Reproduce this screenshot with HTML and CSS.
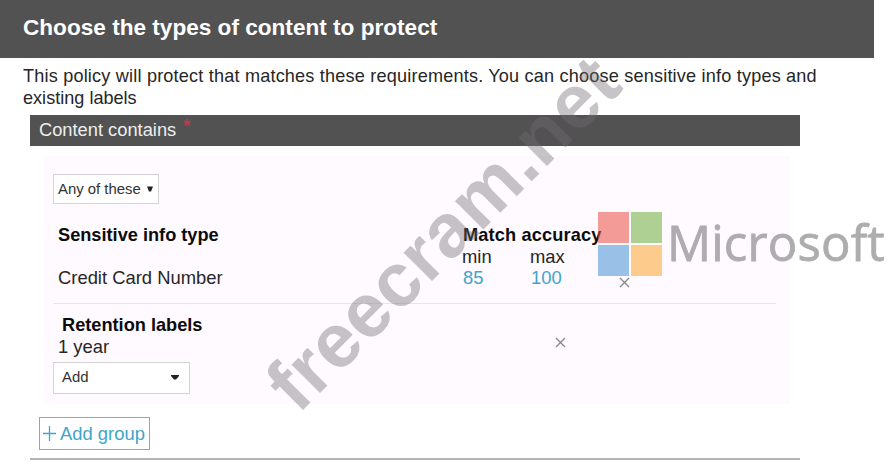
FILE: index.html
```html
<!DOCTYPE html>
<html>
<head>
    <meta charset="utf-8">
    <title>Choose the types of content to protect</title>
    <link rel="stylesheet" href="styles.css">
</head>
<body>
    <h1 class="page-title">Choose the types of content to protect</h1>
    <p class="intro"><span class="first-line">This policy will protect that matches these requirements. You can choose sensitive info types and</span><br>existing labels</p>

    <div class="policy">
        <h2 class="section-title">Content contains <span class="required">*</span></h2>

        <div class="group">
            <button class="select select-any">Any of these
                <svg class="arrow" width="6" height="6" viewBox="0 0 6 6"><path d="M0 .5h6L4 5.5H2z"/></svg>
            </button>

            <div class="info-types">
                <b>Sensitive info type</b>
                <b class="accuracy">Match accuracy</b>
                <span class="min">min</span>
                <span class="max">max</span>
                <span class="name">Credit Card Number</span>
                <a class="min value">85</a>
                <a class="max value">100</a>
                <svg class="remove" width="11" height="11" viewBox="0 0 11 11"><path d="M1 1l9 9M10 1l-9 9"/></svg>
            </div>

            <div class="labels">
                <div>
                    <b class="labels-title">Retention labels</b>
                    <div class="label-name">1 year</div>
                </div>
                <svg class="remove" width="11" height="11" viewBox="0 0 11 11"><path d="M1 1l9 9M10 1l-9 9"/></svg>
            </div>

            <button class="select select-add">Add
                <svg class="arrow" width="8" height="5" viewBox="0 0 8 5"><path d="M0 0h8v1L5 4.5H3L0 1z"/></svg>
            </button>
        </div>

        <button class="add-group">
            <svg class="plus" width="13" height="15" viewBox="0 0 13 15"><path d="M6.5 0v15M0 7.5h13"/></svg>
            Add group
        </button>
    </div>

    <!-- overlays -->
    <svg class="watermark" width="890" height="476" viewBox="0 0 890 476">
        <text transform="translate(298 415) rotate(-45)" textLength="462">freecram.net</text>
    </svg>
    <div class="logo">
        <div class="squares">
            <i class="red"></i><i class="green"></i>
            <i class="blue"></i><i class="yellow"></i>
        </div>
        <span class="logo-name">Microsoft</span>
    </div>
</body>
</html>
```

FILE: styles.css
```css
* {
    box-sizing: border-box;
}
body {
    margin: 0;
    height: 476px;
    overflow: hidden;
    position: relative;
    background: #fff;
    color: #262626;
    font-family: "Liberation Sans", Arial, sans-serif;
    font-size: 18.4px;
    line-height: 22px;
}
.page-title {
    margin: 0;
    width: 874px;
    height: 58px;
    padding: 14px 23px;
    background: #525252;
    color: #fff;
    font-size: 22.6px;
    line-height: 27px;
}
.intro {
    margin: 7px 0 6px 23px;
    font-size: 18.1px;
    white-space: nowrap;
}
.first-line {
    letter-spacing: .19px;
}
.policy {
    width: 770px;
    margin-left: 30px;
    padding-bottom: 8px;
    border-bottom: 2px solid #b5b5b5;
}
.section-title {
    margin: 0 0 10px;
    height: 31px;
    padding: 4px 9px;
    background: #525252;
    color: #eee;
    font-size: 18.3px;
    font-weight: normal;
}
.required {
    margin-left: 2px;
    color: #b5404f;
    font-weight: bold;
    position: relative;
    top: -4px;
}
.group {
    width: 746px;
    height: 248px;
    margin-left: 14px;
    padding: 18px 14px 0 9px;
    background: #fefaff;
}
.select {
    display: flex;
    align-items: center;
    justify-content: space-between;
    background: #fff;
    border: 1px solid #d5d3d6;
    color: #333;
    font-family: inherit;
    font-size: 14.9px;
}
.select-any {
    width: 106px;
    height: 30px;
    padding: 0 5px 0 4px;
}
.select-add {
    width: 137px;
    height: 32px;
    padding: 0 10px 2px 8px;
}
.arrow {
    fill: #222;
}
.info-types {
    display: grid;
    grid-template-columns: 404px 68px 89px 1fr;
    grid-template-rows: 22px 21px 22px;
    margin-top: 20px;
    padding: 0 0 14px 5px;
    border-bottom: 1px solid #e9e4ea;
}
b {
    color: #0c0c0c;
    font-size: 18.2px;
}
.accuracy {
    grid-column: 2 / 5;
    padding-left: 1px;
    letter-spacing: .15px;
}
.min {
    grid-column: 2;
}
.max {
    grid-column: 3;
}
.name {
    grid-column: 1;
}
.value {
    color: #40a5c8;
    padding-left: 1px;
}
.remove {
    stroke: #888;
    stroke-width: 1.3;
    fill: none;
}
.info-types .remove {
    margin-top: 10px;
}
.labels {
    display: grid;
    grid-template-columns: 502px 1fr;
    align-items: center;
    margin: 10px 0 4px;
}
.labels-title {
    padding-left: 9px;
}
.label-name {
    padding-left: 5px;
}
.labels .remove {
    margin-top: 12px;
}
.add-group {
    display: flex;
    align-items: center;
    gap: 4px;
    width: 111px;
    height: 33px;
    margin: 13px 0 0 9px;
    padding: 0 3px;
    background: #fff;
    border: 1px solid #7daebf;
    color: #40a5c8;
    font-family: inherit;
    font-size: 18.4px;
    white-space: nowrap;
}
.plus {
    flex: none;
    stroke: #40a5c8;
    stroke-width: 1.3;
}
.watermark {
    position: absolute;
    left: 0;
    top: 0;
    font-size: 76px;
    font-weight: bold;
    fill: rgba(112, 108, 112, .4);
}
.logo {
    position: absolute;
    left: 598px;
    top: 212px;
    display: flex;
    align-items: flex-start;
}
.squares {
    display: grid;
    grid-template-columns: 31px 31px;
    grid-template-rows: 31px 31px;
    gap: 2px;
}
.red {
    background: rgba(231, 76, 66, .55);
}
.green {
    background: rgba(110, 173, 58, .55);
}
.blue {
    background: rgba(69, 143, 211, .55);
}
.yellow {
    background: rgba(252, 171, 64, .6);
}
.logo-name {
    margin-left: 5px;
    color: #aeacae;
    font-family: "Open Sans", sans-serif;
    font-size: 49px;
    letter-spacing: .2px;
    line-height: 60px;
    -webkit-text-stroke: .8px #aeacae;
}
```
